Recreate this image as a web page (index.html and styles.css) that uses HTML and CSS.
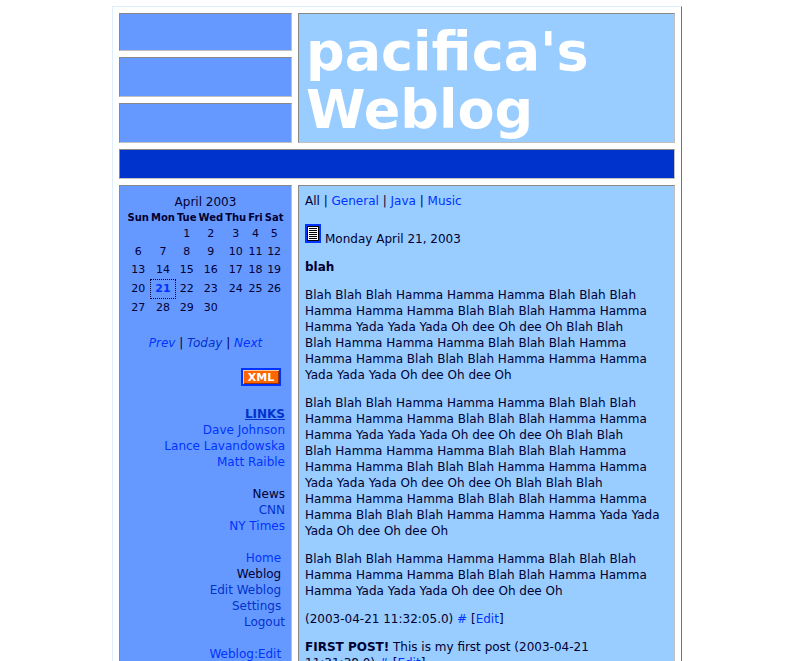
FILE: index.html
```html
<!DOCTYPE html>
<html lang="en">
<head>
<meta charset="utf-8">
<meta name="viewport" content="width=device-width, initial-scale=1">
<title>pacifica's Weblog</title>
<link rel="stylesheet" href="styles.css">
</head>
<body>
<div class="page">
  <header class="masthead">
    <div class="tiles"><div class="tile"></div><div class="tile"></div><div class="tile"></div></div>
    <div class="banner"><h1>pacifica's<br>Weblog</h1></div>
  </header>
  <div class="bar"></div>
  <div class="columns">
    <aside class="sidebar">
      <table class="calendar">
        <caption>April 2003</caption>
        <thead><tr><th>Sun</th><th>Mon</th><th>Tue</th><th>Wed</th><th>Thu</th><th>Fri</th><th>Sat</th></tr></thead>
        <tbody>
          <tr><td></td><td></td><td>1</td><td>2</td><td>3</td><td>4</td><td>5</td></tr>
          <tr><td>6</td><td>7</td><td>8</td><td>9</td><td>10</td><td>11</td><td>12</td></tr>
          <tr><td>13</td><td>14</td><td>15</td><td>16</td><td>17</td><td>18</td><td>19</td></tr>
          <tr><td>20</td><td class="today"><a href="#">21</a></td><td>22</td><td>23</td><td>24</td><td>25</td><td>26</td></tr>
          <tr><td>27</td><td>28</td><td>29</td><td>30</td><td></td><td></td><td></td></tr>
        </tbody>
      </table>
      <nav class="months"><a href="#">Prev</a> | <a class="visited" href="#">Today</a> | <a href="#">Next</a></nav>
      <div class="feed"><a class="xml" href="#">XML</a></div>
      <ul class="links">
        <li class="heading">LINKS</li>
        <li><a href="#">Dave Johnson</a></li>
        <li><a href="#">Lance Lavandowska</a></li>
        <li><a href="#">Matt Raible</a></li>
      </ul>
      <ul class="links">
        <li>News</li>
        <li><a class="visited" href="#">CNN</a></li>
        <li><a href="#">NY Times</a></li>
      </ul>
      <ul class="links">
        <li><a href="#">Home</a>&nbsp;</li>
        <li>Weblog&nbsp;</li>
        <li><a class="visited" href="#">Edit Weblog</a>&nbsp;</li>
        <li><a class="visited" href="#">Settings</a>&nbsp;</li>
        <li><a class="visited" href="#">Logout</a></li>
      </ul>
      <ul class="links">
        <li><a href="#">Weblog:Edit</a>&nbsp;</li>
      </ul>
    </aside>
    <main class="content">
      <nav class="categories">All | <a href="#">General</a> | <a href="#">Java</a> | <a href="#">Music</a></nav>
      <div class="date">
        <a class="day" href="#" aria-label="Permalink for the day"><svg width="16" height="19" viewBox="0 0 16 19" shape-rendering="crispEdges"><path fill="#0033ff" d="M0 0h16v19H0z"/><path fill="#000" d="M2 2h12v15H2z"/><path fill="#fff" d="M3 3h10v13H3z"/><path fill="#000" d="M4 4h8v1H4zM4 6h8v1H4zM4 8h8v1H4zM4 10h8v1H4zM4 12h8v1H4zM4 14h8v1H4z"/></svg></a>
        <span>Monday April 21, 2003</span>
      </div>
      <h2>blah</h2>
      <p>Blah Blah Blah Hamma Hamma Hamma Blah Blah Blah<br>Hamma Hamma Hamma Blah Blah Blah Hamma Hamma<br>Hamma Yada Yada Yada Oh dee Oh dee Oh Blah Blah<br>Blah Hamma Hamma Hamma Blah Blah Blah Hamma<br>Hamma Hamma Blah Blah Blah Hamma Hamma Hamma<br>Yada Yada Yada Oh dee Oh dee Oh</p>
      <p>Blah Blah Blah Hamma Hamma Hamma Blah Blah Blah<br>Hamma Hamma Hamma Blah Blah Blah Hamma Hamma<br>Hamma Yada Yada Yada Oh dee Oh dee Oh Blah Blah<br>Blah Hamma Hamma Hamma Blah Blah Blah Hamma<br>Hamma Hamma Blah Blah Blah Hamma Hamma Hamma<br>Yada Yada Yada Oh dee Oh dee Oh Blah Blah Blah<br>Hamma Hamma Hamma Blah Blah Blah Hamma Hamma<br>Hamma Blah Blah Blah Hamma Hamma Hamma Yada Yada<br>Yada Oh dee Oh dee Oh</p>
      <p>Blah Blah Blah Hamma Hamma Hamma Blah Blah Blah<br>Hamma Hamma Hamma Blah Blah Blah Hamma Hamma<br>Hamma Yada Yada Yada Oh dee Oh dee Oh</p>
      <p>(2003-04-21 11:32:05.0) <a href="#">#</a> [<a href="#">Edit</a>]</p>
      <p><b>FIRST POST!</b> This is my first post (2003-04-21<br>11:31:38.0) <a href="#">#</a> [<a href="#">Edit</a>]</p>
    </main>
  </div>
</div>
</body>
</html>
```
FILE: styles.css
```css
* { box-sizing: border-box; }
body {
  margin: 0;
  padding: 6px 4px 0 0;
  background: #fff;
  color: #000033;
  font: 12px/16px "DejaVu Sans", Verdana, sans-serif;
}
a { color: #0033ff; text-decoration: none; }
a.visited { color: #0033cc; }
.page {
  max-width: 570px;
  margin: 0 auto;
  padding: 6px;
  border: 1px solid #ddeeff;
  border-right-color: #557799;
  display: flex;
  flex-direction: column;
  gap: 6px;
}
.masthead, .columns {
  display: grid;
  grid-template-columns: 173px 1fr;
  gap: 6px;
}
.tiles { display: grid; grid-template-rows: 38px 40px 40px; gap: 6px; }
.tile, .banner, .bar, .sidebar, .content {
  border: 1px solid #c0c0c0;
  border-top-color: #888;
  border-left-color: #888;
}
.tile, .sidebar { background: #6699ff; }
.banner, .content { background: #99ccff; }
.banner { padding: 9px 7px 0; }
.bar { height: 30px; background: #0033cc; }
h1 { margin: 0; color: #fff; font-size: 54px; line-height: 58px; font-weight: bold; }
.sidebar { padding: 8px 6px; text-align: right; }
.calendar {
  margin: 0 auto;
  border-collapse: separate;
  border-spacing: 0;
  font-size: 11px;
  text-align: center;
}
.calendar caption { font-size: 12px; line-height: 16px; }
.calendar th { padding: 0 1px; font-size: 10px; line-height: 15px; }
.calendar td { padding: 0; height: 18px; line-height: 18px; }
.calendar .today { border: 1px dotted #000033; font-weight: bold; }
.months { margin-top: 18px; text-align: center; }
.months a { font-style: italic; }
.feed { margin: 17px 4px 20px 0; display: flex; justify-content: flex-end; }
.xml {
  width: 40px;
  height: 18px;
  border: 2px solid #0033ff;
  background: #ff6600;
  box-shadow: inset 1px 1px #ffcc99, inset -1px -1px #993300;
  color: #fff;
  font-size: 11px;
  line-height: 15px;
  font-weight: bold;
  text-align: center;
}
.links { list-style: none; margin: 0 0 16px; padding: 0; }
.heading { color: #0033cc; font-weight: bold; text-decoration: underline; }
.content { padding: 7px 6px; }
.date { margin-top: 15px; display: flex; gap: 4px; align-items: flex-end; }
.day { display: block; height: 23px; }
.day svg { display: block; }
h2 { margin: 12px 0; font-size: 12px; line-height: 16px; }
p { margin: 0 0 12px; }
```
